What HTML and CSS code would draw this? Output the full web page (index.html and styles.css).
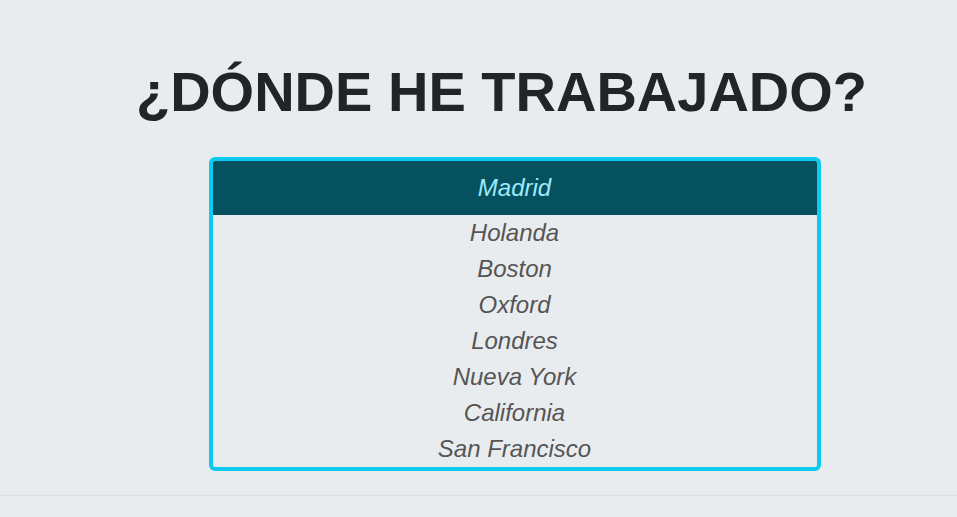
FILE: index.html
```html
<!DOCTYPE html>
<html lang="es">
<head>
<meta charset="utf-8">
<title>¿Dónde he trabajado?</title>
<link rel="stylesheet" href="styles.css">
</head>
<body>
<section class="work">
  <h1 class="work-title">¿DÓNDE HE TRABAJADO?</h1>
  <div class="work-wrap">
    <ul class="places">
      <li class="place place-active">Madrid</li>
      <li class="place">Holanda</li>
      <li class="place">Boston</li>
      <li class="place">Oxford</li>
      <li class="place">Londres</li>
      <li class="place">Nueva York</li>
      <li class="place">California</li>
      <li class="place">San Francisco</li>
    </ul>
  </div>
</section>
<hr class="divider">
</body>
</html>
```
FILE: styles.css
```css
html, body {
  margin: 0;
  padding: 0;
  background: #e9ecef;
  font-family: "Liberation Sans", Arial, sans-serif;
}

.work {
  padding-top: 58px;
  padding-bottom: 24px;
}

.work-title {
  margin: 0 0 32px 46px;
  font-size: 56px;
  line-height: 67px;
  font-weight: 700;
  text-align: center;
  color: #212529;
}

.work-wrap {
  display: flex;
  justify-content: center;
  padding-left: 72px;
}

.places {
  list-style: none;
  margin: 0;
  padding: 0;
  width: 604px;
  border: 4px solid #0dcaf0;
  border-radius: 6px;
  overflow: hidden;
}

.place {
  height: 36px;
  line-height: 36px;
  font-size: 24px;
  font-style: italic;
  text-align: center;
  color: #555;
}

.place-active {
  height: 54px;
  line-height: 54px;
  background: #055160;
  color: #9eeaf9;
}

.divider {
  margin: 0;
  border: 0;
  border-top: 1px solid #dadde1;
}
```
